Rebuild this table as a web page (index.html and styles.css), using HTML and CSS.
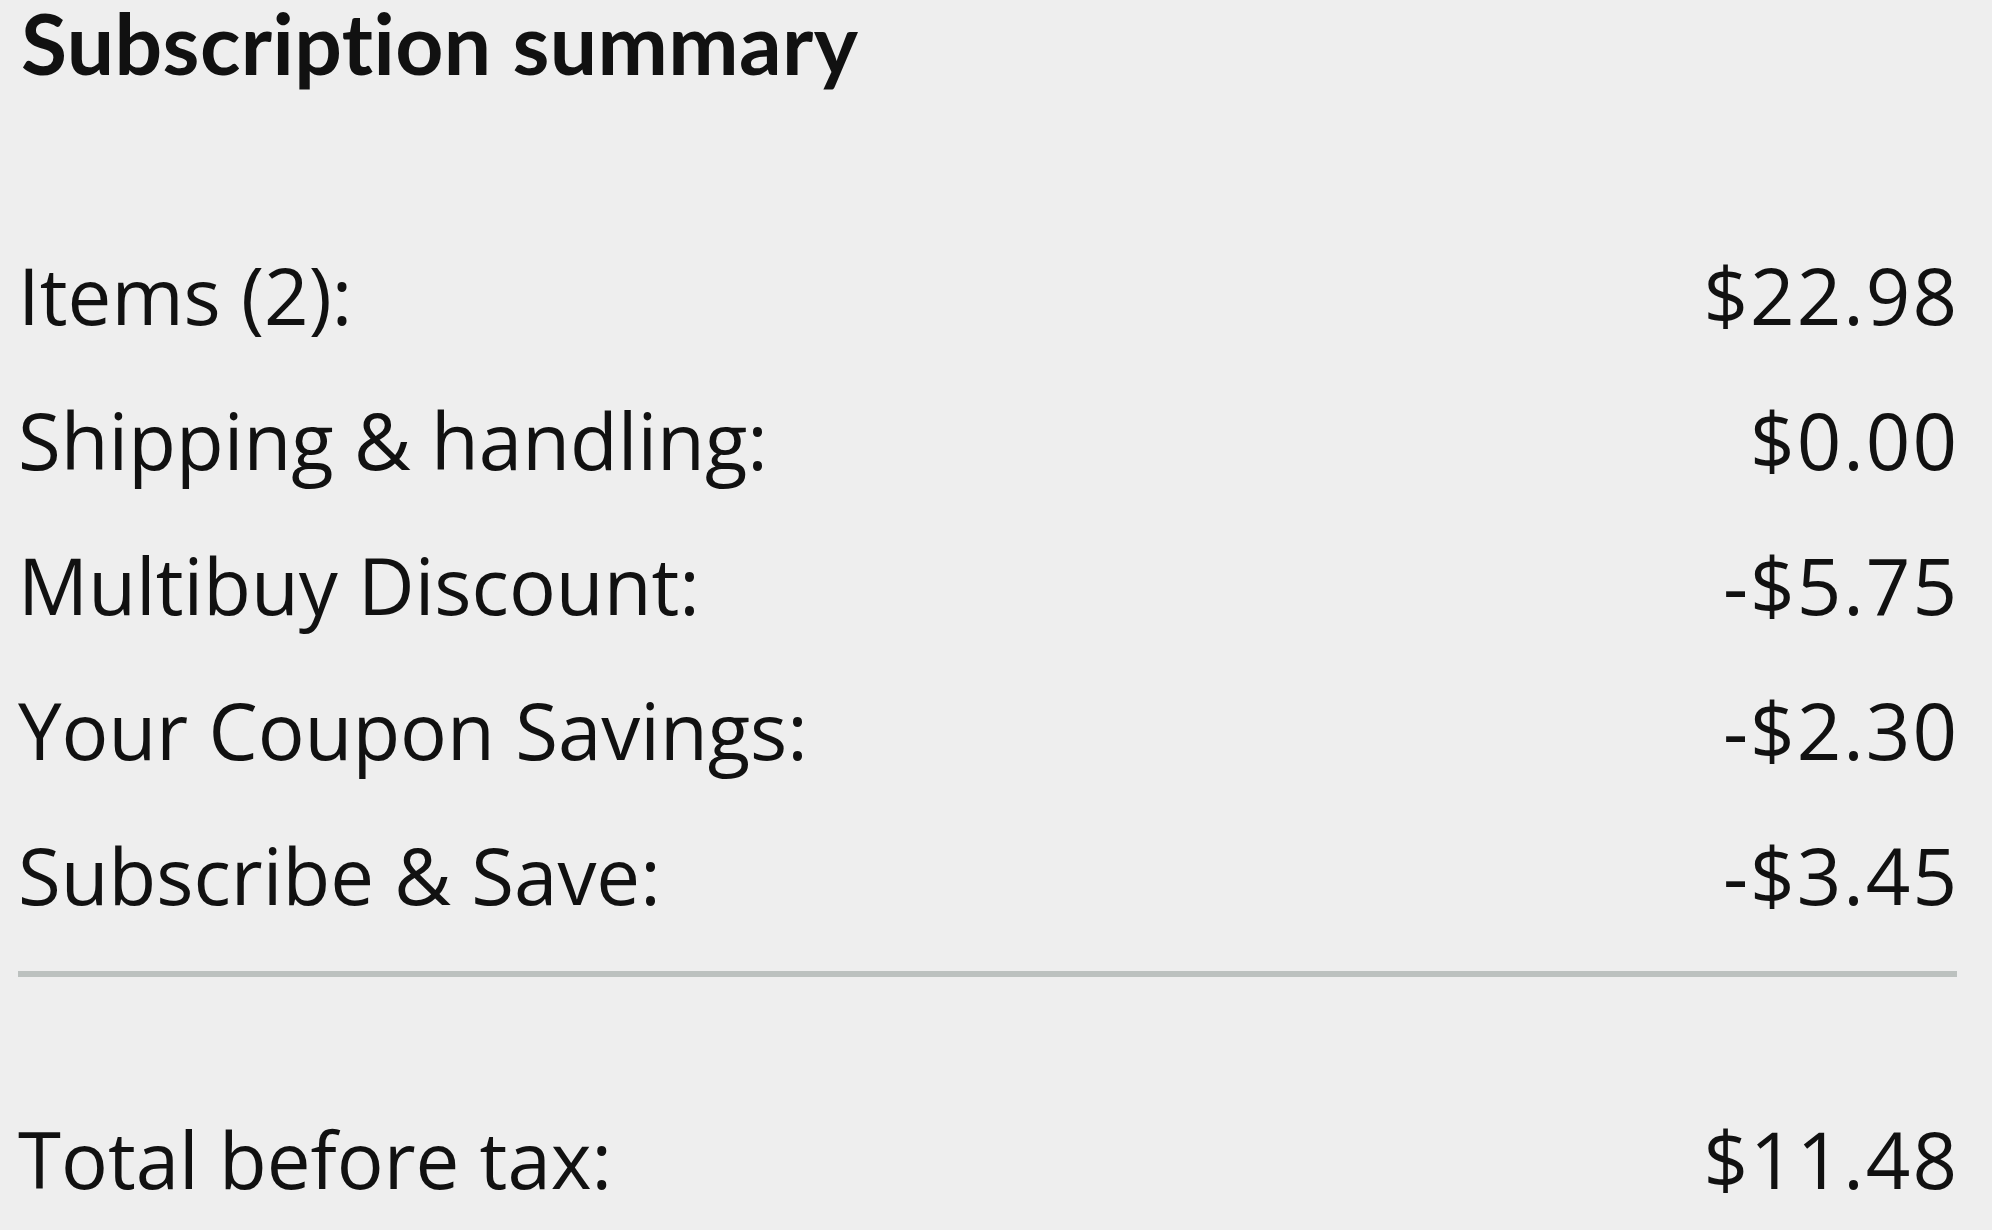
FILE: index.html
```html
<!DOCTYPE html>
<html>
<head>
<meta charset="utf-8">
<link rel="stylesheet" href="styles.css">
</head>
<body>
<div class="summary">
  <h2 class="title">Subscription summary</h2>
  <div class="rows">
    <div class="row"><span>Items (2):</span><span class="amount">$22.98</span></div>
    <div class="row"><span>Shipping &amp; handling:</span><span class="amount">$0.00</span></div>
    <div class="row"><span>Multibuy Discount:</span><span class="amount">-$5.75</span></div>
    <div class="row"><span>Your Coupon Savings:</span><span class="amount">-$2.30</span></div>
    <div class="row"><span>Subscribe &amp; Save:</span><span class="amount">-$3.45</span></div>
  </div>
  <div class="divider"></div>
  <div class="row total"><span>Total before tax:</span><span class="amount">$11.48</span></div>
</div>
</body>
</html>
```

FILE: styles.css
```css
html, body {
  margin: 0;
  padding: 0;
  background: #eeeeee;
}
body {
  font-family: "Open Sans", "Noto Sans", sans-serif;
  color: #111111;
}
.summary {
  width: 1939px;
  margin-left: 18px;
  display: flex;
  flex-direction: column;
}
.title {
  margin: 0;
  font-family: Lato, "Open Sans", sans-serif;
  font-size: 84px;
  font-weight: 700;
  letter-spacing: 0.4px;
  line-height: 85px;
  padding-left: 3px;
}
.rows {
  margin-top: 138px;
  display: flex;
  flex-direction: column;
}
.row {
  display: flex;
  justify-content: space-between;
  font-size: 78px;
  line-height: 145px;
  height: 145px;
}
.amount {
  letter-spacing: 2px;
  margin-right: -2px;
}
.divider {
  margin-top: 23px;
  height: 6px;
  background: #bcc1bf;
}
.total {
  margin-top: 110px;
}
```
